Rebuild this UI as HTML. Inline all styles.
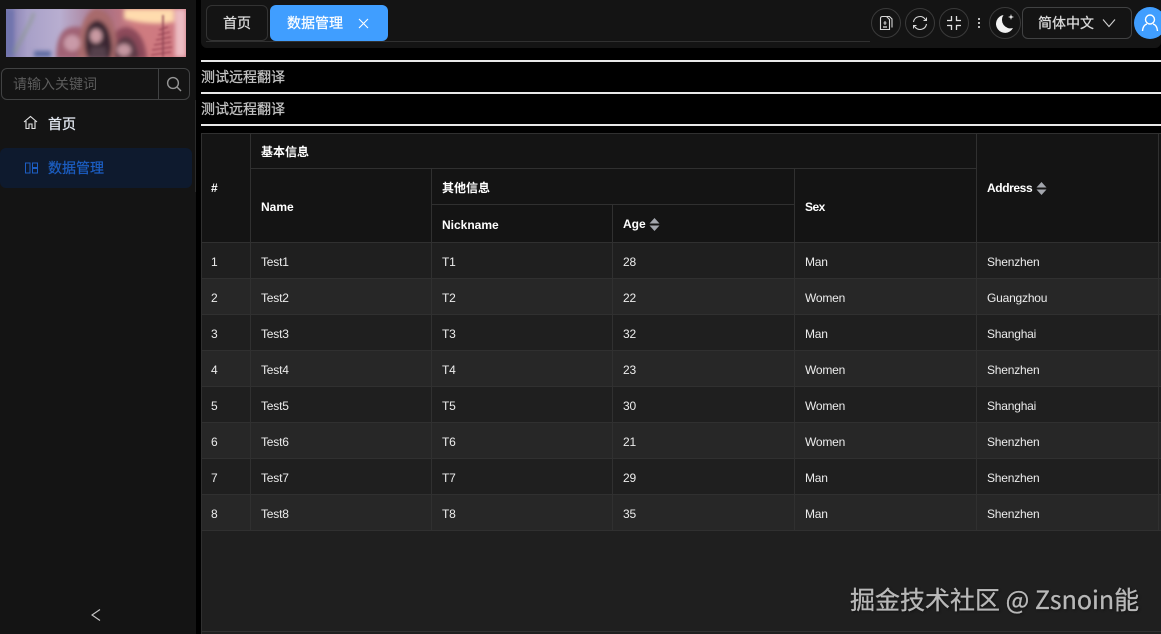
<!DOCTYPE html>
<html><head><meta charset="utf-8"><style>
*{box-sizing:border-box}
html,body{margin:0;padding:0;width:1161px;height:634px;overflow:hidden;background:#000;font-family:"Liberation Sans","Noto Sans CJK SC",sans-serif;color:#e5eaf3}
.a{position:absolute}
.cell{position:absolute;font-size:12px;line-height:16px;color:#ececec;white-space:nowrap;letter-spacing:-.2px}
.th{font-weight:bold;color:#fff;letter-spacing:0}
.line{position:absolute;background:#303030}
.btn{position:absolute;top:8px;width:30px;height:30px;border:1px solid #3a3a3a;border-radius:50%;background:#141414}
.hr{position:absolute;left:201px;width:960px;height:2px;background:#e8e8e8}
.t{position:absolute;left:201px;font-size:14px;line-height:20px;color:#c4c4c4;white-space:nowrap;-webkit-text-stroke:.25px #c4c4c4}
.s{-webkit-text-stroke:.25px currentColor}
</style></head><body>
<div class="a" style="left:0;top:0;width:196px;height:634px;background:#141414"></div>
<svg class="a" style="left:6px;top:9px" width="180" height="48" viewBox="0 0 180 48">
<defs><linearGradient id="g" x1="0" x2="1" y1="0" y2="0"><stop offset="0" stop-color="#8079ad"/><stop offset=".12" stop-color="#a8a0c8"/><stop offset=".3" stop-color="#b8aed0"/><stop offset=".55" stop-color="#a87084"/><stop offset=".72" stop-color="#cf7c80"/><stop offset="1" stop-color="#cf7882"/></linearGradient><filter id="b"><feGaussianBlur stdDeviation="2"/></filter><filter id="b2"><feGaussianBlur stdDeviation="1"/></filter><clipPath id="c"><rect width="180" height="48"/></clipPath></defs>
<g clip-path="url(#c)"><rect width="180" height="48" fill="url(#g)"/>
<g filter="url(#b)">
<path d="M118 0H168V13Q145 17 118 10Z" fill="#ffdcae"/>
<rect x="-3" y="0" width="11" height="48" fill="#6f74ad"/>
<path d="M8 44L24 14L28 4" stroke="#8a9a8a" stroke-width="2" fill="none"/>
<rect x="169" y="0" width="11" height="48" fill="#ecbcc2"/>
<path d="M28 42H45V48H28Z" fill="#5b6aa0"/>
<path d="M50 50Q50 20 66 18Q76 16 80 24L80 50Z" fill="#a06274"/>
<path d="M104 50Q102 20 120 18Q138 20 141 50Z" fill="#8c4a5a"/>
<path d="M72 50Q72 6 90 -1Q108 2 110 30L112 50Z" fill="#a86a6c"/>
<path d="M79 40Q77 14 91 11Q104 13 106 38L104 50H82Z" fill="#3a2833"/>
<ellipse cx="90" cy="27" rx="6" ry="7" fill="#c99aa2"/>
<path d="M82 50L86 38H99L102 50Z" fill="#55404c"/>
<path d="M109 50Q108 30 119 27Q131 28 133 50Z" fill="#5d3a47"/>
<ellipse cx="118" cy="41" rx="7" ry="6" fill="#c496a0"/>
<ellipse cx="66" cy="34" rx="8" ry="8" fill="#c99aa8"/>
</g>
<g filter="url(#b2)" stroke="#a04a58" stroke-width="1.500" fill="none"><path d="M145 46L165 43M146 41L166 38M148 36L165 33M150 31L165 28M152 26L164 23M153 21L162 18"/><path d="M157 6V48" stroke="#8f4452" stroke-width="1.500"/></g>
</g></svg>
<div class="a" style="left:1px;top:68px;width:189px;height:32px;border:1px solid #414243;border-radius:6px;background:#141414"></div>
<div class="a" style="left:158px;top:69px;width:1px;height:30px;background:#414243"></div>
<div class="a" style="left:13px;top:74px;font-size:14px;line-height:20px;color:#5c5c5c">请输入关键词</div>
<svg class="a" style="left:166px;top:76px" width="16" height="16" viewBox="0 0 16 16" fill="none" stroke="#969696" stroke-width="1.400"><circle cx="7" cy="7" r="5.400"/><path d="M11 11l4 4"/></svg>
<svg class="a" style="left:23px;top:115px" width="15" height="15" viewBox="0 0 15 15" fill="none" stroke="#e5e5e5" stroke-width="1.100"><path d="M1 7L7.500 1.500L14 7M3 6V13.500H6V9H9V13.500H12V6"/></svg>
<div class="a s" style="left:48px;top:114px;font-size:14px;line-height:20px;color:#e5eaf3">首页</div>
<div class="a" style="left:0;top:148px;width:192px;height:40px;border-radius:6px;background:#0e1a2e"></div>
<svg class="a" style="left:25px;top:162px" width="13" height="12" viewBox="0 0 13 12" fill="none" stroke="#1d5fc4" stroke-width="1"><rect x=".5" y="1" width="4.500" height="10"/><rect x="7.500" y="1" width="5" height="4.500"/><rect x="7.500" y="6.500" width="5" height="4.500"/></svg>
<div class="a s" style="left:48px;top:158px;font-size:14px;line-height:20px;color:#1c5ec2">数据管理</div>
<div class="a" style="left:195px;top:100px;width:1px;height:92px;background:#2a2a2a"></div>
<svg class="a" style="left:90px;top:608px" width="12" height="14" viewBox="0 0 12 14" fill="none" stroke="#c8c8c8" stroke-width="1.100"><path d="M10 1.500L2 7L10 12.500"/></svg>

<div class="a" style="left:201px;top:0;width:960px;height:48px;background:#141414;border-radius:0 0 6px 6px"></div>
<div class="a" style="left:206px;top:41px;width:664px;height:1px;background:#303030"></div>
<div class="a s" style="left:206px;top:5px;width:62px;height:36px;border:1px solid #333;border-radius:6px;background:#141414;text-align:center;font-size:14px;line-height:34px;color:#dcdcdc">首页</div>
<div class="a" style="left:270px;top:5px;width:118px;height:36px;border-radius:6px;background:#409eff"></div>
<div class="a s" style="left:287px;top:13px;font-size:14px;line-height:20px;color:#fff">数据管理</div>
<svg class="a" style="left:358px;top:18px" width="11" height="11" viewBox="0 0 11 11" stroke="#fff" stroke-width="1.100"><path d="M1 1L10 10M10 1L1 10"/></svg>

<div class="btn" style="left:871px"></div><div class="btn" style="left:905px"></div><div class="btn" style="left:939px"></div><div class="btn" style="left:989px;top:7px;width:32px;height:32px"></div>
<svg class="a" style="left:879px;top:15px" width="14" height="16" viewBox="0 0 14 16" fill="none" stroke="#d8d8d8" stroke-width="1.100"><path d="M3.500 1.500H7.500L10.500 4.500V14.500H1.500V3.500Q1.500 1.500 3.500 1.500Z"/><path d="M8 1.500H10.500L13 4V12.500"/><path d="M4 12H8" stroke-width="1.300"/><path d="M6 6V10M4.500 8H7.500" stroke-width="1"/></svg>
<svg class="a" style="left:912px;top:15px" width="16" height="16" viewBox="0 0 16 16" fill="none" stroke="#d8d8d8" stroke-width="1.100"><path d="M1.500 7A6.500 6.500 0 0 1 13 4L14.500 5.500M14.500 9A6.500 6.500 0 0 1 3 12L1.500 10.500"/><path d="M14.500 2.500V5.500H11.500M1.500 13.500V10.500H4.500" stroke-width="1"/></svg>
<svg class="a" style="left:946px;top:15px" width="16" height="16" viewBox="0 0 16 16" fill="none" stroke="#e0e0e0" stroke-width="1.300"><path d="M5.500 1V5.500H1M10.500 1V5.500H15M5.500 15V10.500H1M10.500 15V10.500H15"/></svg>
<div class="a" style="left:978px;top:18px;width:2px;height:2px;background:#bbb;box-shadow:0 4px #bbb,0 8px #bbb"></div>
<svg class="a" style="left:994px;top:12px" width="24" height="22" viewBox="0 0 24 22"><path d="M9.500 3A9 9 0 1 0 19 16A8.500 8.500 0 0 1 9.500 3Z" fill="#f2f2f2"/><path d="M17 2L17.700 4.300L20 5L17.700 5.700L17 8L16.300 5.700L14 5L16.300 4.300Z" fill="#eee"/></svg>
<div class="a" style="left:1022px;top:7px;width:110px;height:32px;border:1px solid #414243;border-radius:6px;background:#141414"></div>
<div class="a s" style="left:1038px;top:13px;font-size:14px;line-height:20px;color:#dcdcdc">简体中文</div>
<svg class="a" style="left:1102px;top:18px" width="14" height="10" viewBox="0 0 14 10" fill="none" stroke="#d0d0d0" stroke-width="1.100"><path d="M1 1.500L7 8.500L13 1.500"/></svg>
<div class="a" style="left:1134px;top:7px;width:32px;height:32px;border-radius:50%;background:#409eff"></div>
<svg class="a" style="left:1141px;top:13px" width="18" height="20" viewBox="0 0 18 20" fill="none" stroke="#fff" stroke-width="1.400"><circle cx="9" cy="6.500" r="4.500"/><path d="M1.500 18Q2 12 6 11M16.500 18Q16 12 12 11"/></svg>

<div class="hr" style="top:60px"></div><div class="t" style="top:67px">测试远程翻译</div>
<div class="hr" style="top:92px"></div><div class="t" style="top:99px">测试远程翻译</div>
<div class="hr" style="top:124px"></div>

<div class="a" style="left:201px;top:133px;width:960px;height:501px;background:#1f1f1f"></div>
<div class="a" style="left:201px;top:133px;width:960px;height:109px;background:#141414"></div>
<div class="a" style="left:201px;top:278px;width:960px;height:36px;background:#272727"></div>
<div class="a" style="left:201px;top:350px;width:960px;height:36px;background:#272727"></div>
<div class="a" style="left:201px;top:422px;width:960px;height:36px;background:#272727"></div>
<div class="a" style="left:201px;top:494px;width:960px;height:36px;background:#272727"></div>

<div class="line" style="left:201px;top:133px;width:960px;height:1px"></div>
<div class="line" style="left:250px;top:168px;width:726px;height:1px"></div>
<div class="line" style="left:431px;top:204px;width:363px;height:1px"></div>
<div class="line" style="left:201px;top:242px;width:960px;height:1px"></div>
<div class="line" style="left:201px;top:278px;width:960px;height:1px"></div>
<div class="line" style="left:201px;top:314px;width:960px;height:1px"></div>
<div class="line" style="left:201px;top:350px;width:960px;height:1px"></div>
<div class="line" style="left:201px;top:386px;width:960px;height:1px"></div>
<div class="line" style="left:201px;top:422px;width:960px;height:1px"></div>
<div class="line" style="left:201px;top:458px;width:960px;height:1px"></div>
<div class="line" style="left:201px;top:494px;width:960px;height:1px"></div>
<div class="line" style="left:201px;top:530px;width:960px;height:1px"></div>
<div class="line" style="left:201px;top:631px;width:960px;height:1px"></div>
<div class="line" style="left:201px;top:133px;width:1px;height:501px"></div>
<div class="line" style="left:250px;top:133px;width:1px;height:397px"></div>
<div class="line" style="left:431px;top:168px;width:1px;height:362px"></div>
<div class="line" style="left:612px;top:204px;width:1px;height:326px"></div>
<div class="line" style="left:794px;top:168px;width:1px;height:362px"></div>
<div class="line" style="left:976px;top:133px;width:1px;height:397px"></div>
<div class="line" style="left:1158px;top:133px;width:1px;height:397px"></div>

<div class="cell th" style="left:211px;top:180px">#</div>
<div class="cell th" style="left:261px;top:144px">基本信息</div>
<div class="cell th" style="left:261px;top:199px">Name</div>
<div class="cell th" style="left:442px;top:180px">其他信息</div>
<div class="cell th" style="left:442px;top:217px">Nickname</div>
<div class="cell th" style="left:623px;top:216px">Age</div>
<div class="cell th" style="left:805px;top:199px;letter-spacing:-.5px">Sex</div>
<div class="cell th" style="left:987px;top:180px;letter-spacing:-.4px">Address</div>
<svg class="a" style="left:649px;top:217px" width="11" height="15" viewBox="0 0 11 15" fill="#a3a6ad"><path d="M5.500 1L10.500 6.500H.5ZM.5 8.500H10.500L5.500 14Z"/></svg>
<svg class="a" style="left:1036px;top:181px" width="11" height="15" viewBox="0 0 11 15" fill="#a3a6ad"><path d="M5.500 1L10.500 6.500H.5ZM.5 8.500H10.500L5.500 14Z"/></svg>

<div class="cell" style="left:211px;top:254px">1</div><div class="cell" style="left:261px;top:254px">Test1</div><div class="cell" style="left:442px;top:254px">T1</div><div class="cell" style="left:623px;top:254px">28</div><div class="cell" style="left:805px;top:254px">Man</div><div class="cell" style="left:987px;top:254px">Shenzhen</div>
<div class="cell" style="left:211px;top:290px">2</div><div class="cell" style="left:261px;top:290px">Test2</div><div class="cell" style="left:442px;top:290px">T2</div><div class="cell" style="left:623px;top:290px">22</div><div class="cell" style="left:805px;top:290px">Women</div><div class="cell" style="left:987px;top:290px">Guangzhou</div>
<div class="cell" style="left:211px;top:326px">3</div><div class="cell" style="left:261px;top:326px">Test3</div><div class="cell" style="left:442px;top:326px">T3</div><div class="cell" style="left:623px;top:326px">32</div><div class="cell" style="left:805px;top:326px">Man</div><div class="cell" style="left:987px;top:326px">Shanghai</div>
<div class="cell" style="left:211px;top:362px">4</div><div class="cell" style="left:261px;top:362px">Test4</div><div class="cell" style="left:442px;top:362px">T4</div><div class="cell" style="left:623px;top:362px">23</div><div class="cell" style="left:805px;top:362px">Women</div><div class="cell" style="left:987px;top:362px">Shenzhen</div>
<div class="cell" style="left:211px;top:398px">5</div><div class="cell" style="left:261px;top:398px">Test5</div><div class="cell" style="left:442px;top:398px">T5</div><div class="cell" style="left:623px;top:398px">30</div><div class="cell" style="left:805px;top:398px">Women</div><div class="cell" style="left:987px;top:398px">Shanghai</div>
<div class="cell" style="left:211px;top:434px">6</div><div class="cell" style="left:261px;top:434px">Test6</div><div class="cell" style="left:442px;top:434px">T6</div><div class="cell" style="left:623px;top:434px">21</div><div class="cell" style="left:805px;top:434px">Women</div><div class="cell" style="left:987px;top:434px">Shenzhen</div>
<div class="cell" style="left:211px;top:470px">7</div><div class="cell" style="left:261px;top:470px">Test7</div><div class="cell" style="left:442px;top:470px">T7</div><div class="cell" style="left:623px;top:470px">29</div><div class="cell" style="left:805px;top:470px">Man</div><div class="cell" style="left:987px;top:470px">Shenzhen</div>
<div class="cell" style="left:211px;top:506px">8</div><div class="cell" style="left:261px;top:506px">Test8</div><div class="cell" style="left:442px;top:506px">T8</div><div class="cell" style="left:623px;top:506px">35</div><div class="cell" style="left:805px;top:506px">Man</div><div class="cell" style="left:987px;top:506px">Shenzhen</div>

<div class="a" style="left:850px;top:583px;font-size:25px;line-height:32px;color:#b8b8b8;white-space:nowrap;font-family:'Noto Sans CJK SC','Liberation Sans',sans-serif;text-shadow:1px 1px 2px #111;-webkit-text-stroke:.3px #b8b8b8">掘金技术社区 @ Zsnoin能</div>
</body></html>
